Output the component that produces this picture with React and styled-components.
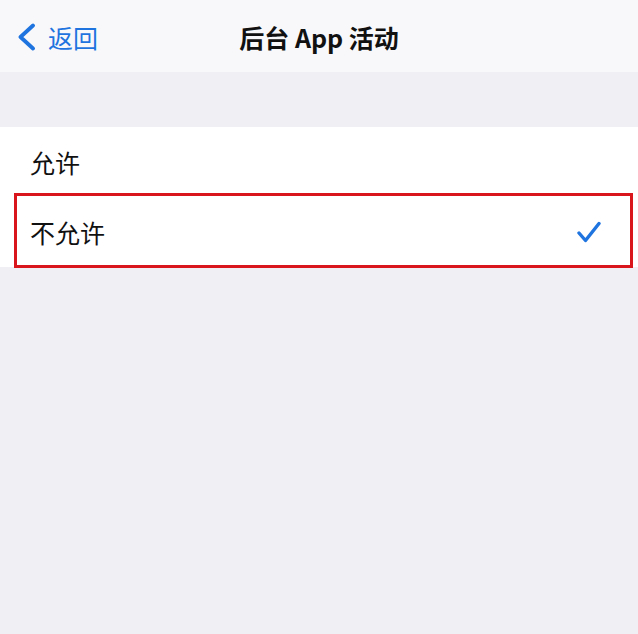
import React from 'react';
import styled, { createGlobalStyle } from 'styled-components';

const GlobalStyle = createGlobalStyle`
  html, body {
    margin: 0;
    padding: 0;
    background: #efeff4;
  }
  body {
    font-family: "Noto Sans CJK SC", "Noto Sans", sans-serif;
    -webkit-font-smoothing: antialiased;
  }
`;

const Screen = styled.div`
  width: 638px;
  min-height: 634px;
  background: #efeff4;
  display: flex;
  flex-direction: column;
`;

const NavBar = styled.header`
  height: 72px;
  background: #f8f8fa;
  display: grid;
  grid-template-columns: 1fr auto 1fr;
  align-items: center;
`;

const BackButton = styled.button`
  justify-self: start;
  display: flex;
  align-items: center;
  gap: 12px;
  padding: 2px 0 0 17px;
  border: none;
  background: none;
  color: #1f74e0;
  font-family: inherit;
  font-size: 25px;
  line-height: 1;
  cursor: pointer;
`;

const Title = styled.h1`
  margin: 0;
  padding-top: 2px;
  font-size: 25px;
  font-weight: 600;
  color: #111;
`;

const Spacer = styled.div`
  height: 55px;
`;

const List = styled.ul`
  margin: 0;
  padding: 0;
  list-style: none;
  background: #fff;
`;

const Row = styled.li`
  position: relative;
  height: 70px;
  display: flex;
  align-items: center;
  justify-content: space-between;
  padding: 0 37px 0 30px;
  font-size: 25px;
  color: #111;
`;

const Highlight = styled.span`
  position: absolute;
  left: 14px;
  right: 5px;
  top: -4px;
  bottom: -1px;
  border: 3px solid #d9161b;
  pointer-events: none;
`;

const ChevronLeft = () => (
  <svg width="19" height="28" viewBox="0 0 19 28" fill="none">
    <path
      d="M16 2.5L3.5 14l12.5 11.5"
      stroke="currentColor"
      strokeWidth="3.8"
      strokeLinecap="round"
      strokeLinejoin="round"
    />
  </svg>
);

const Check = () => (
  <svg width="24" height="22" viewBox="0 0 24 22" fill="none">
    <path
      d="M2 12l6.5 7.5L22 2.5"
      stroke="#1f74e0"
      strokeWidth="3.4"
      strokeLinecap="round"
      strokeLinejoin="round"
    />
  </svg>
);

const options = [
  { label: '允许', selected: false },
  { label: '不允许', selected: true },
];

export default function App() {
  return (
    <>
      <GlobalStyle />
      <Screen>
        <NavBar>
          <BackButton>
            <ChevronLeft />
            返回
          </BackButton>
          <Title>后台 App 活动</Title>
          <div />
        </NavBar>
        <Spacer />
        <List>
          {options.map((opt) => (
            <Row key={opt.label}>
              {opt.label}
              {opt.selected && <Check />}
              {opt.selected && <Highlight />}
            </Row>
          ))}
        </List>
      </Screen>
    </>
  );
}
